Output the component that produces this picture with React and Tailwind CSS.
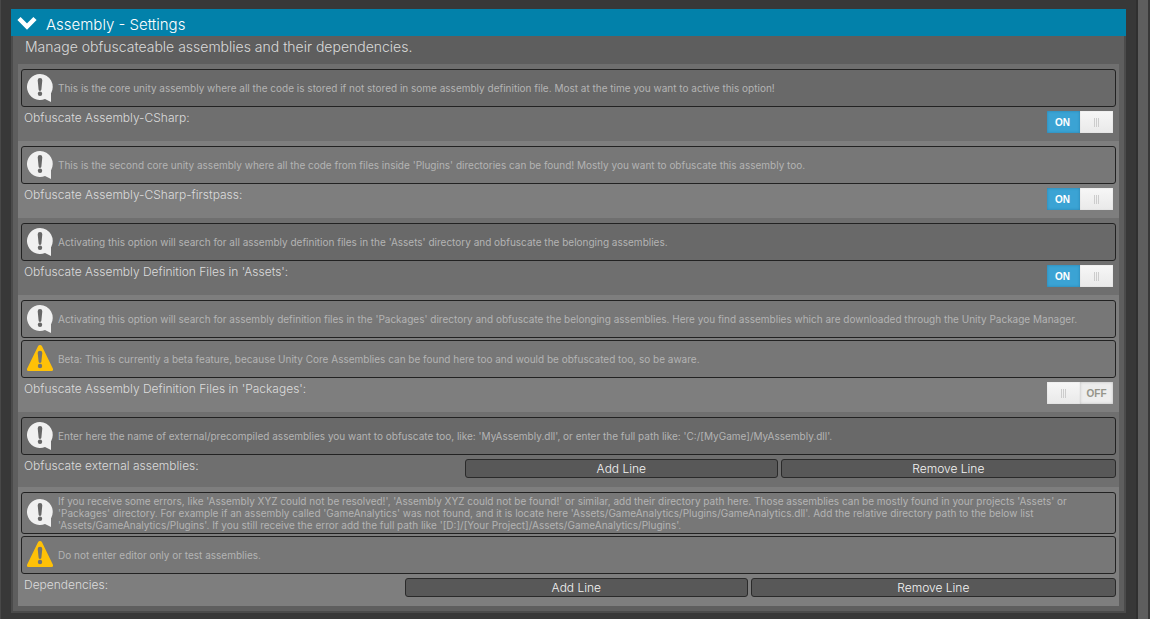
import React, { useId, useState } from 'react';

const sections = [
  {
    label: 'Obfuscate Assembly-CSharp:',
    notes: [
      { type: 'info', text: 'This is the core unity assembly where all the code is stored if not stored in some assembly definition file. Most at the time you want to active this option!' },
    ],
    control: 'toggle',
    on: true,
  },
  {
    label: 'Obfuscate Assembly-CSharp-firstpass:',
    notes: [
      { type: 'info', text: "This is the second core unity assembly where all the code from files inside 'Plugins' directories can be found! Mostly you want to obfuscate this assembly too." },
    ],
    control: 'toggle',
    on: true,
  },
  {
    label: "Obfuscate Assembly Definition Files in 'Assets':",
    notes: [
      { type: 'info', text: "Activating this option will search for all assembly definition files in the 'Assets' directory and obfuscate the belonging assemblies." },
    ],
    control: 'toggle',
    on: true,
  },
  {
    label: "Obfuscate Assembly Definition Files in 'Packages':",
    notes: [
      { type: 'info', text: "Activating this option will search for assembly definition files in the 'Packages' directory and obfuscate the belonging assemblies. Here you find assemblies which are downloaded through the Unity Package Manager." },
      { type: 'warning', text: 'Beta: This is currently a beta feature, because Unity Core Assemblies can be found here too and would be obfuscated too, so be aware.' },
    ],
    control: 'toggle',
    on: false,
  },
  {
    label: 'Obfuscate external assemblies:',
    notes: [
      { type: 'info', text: "Enter here the name of external/precompiled assemblies you want to obfuscate too, like: 'MyAssembly.dll', or enter the full path like: 'C:/[MyGame]/MyAssembly.dll'." },
    ],
    control: 'list',
    labelWidth: 'w-[441px]',
  },
  {
    label: 'Dependencies:',
    notes: [
      { type: 'info', text: "If you receive some errors, like 'Assembly XYZ could not be resolved!', 'Assembly XYZ could not be found!' or similar, add their directory path here. Those assemblies can be mostly found in your projects 'Assets' or 'Packages' directory. For example if an assembly called 'GameAnalytics' was not found, and it is locate here 'Assets/GameAnalytics/Plugins/GameAnalytics.dll'. Add the relative directory path to the below list 'Assets/GameAnalytics/Plugins'. If you still receive the error add the full path like '[D:]/[Your Project]/Assets/GameAnalytics/Plugins'." },
      { type: 'warning', text: 'Do not enter editor only or test assemblies.' },
    ],
    control: 'list',
    labelWidth: 'w-[381px]',
  },
];

const InfoIcon = () => (
  <svg viewBox="0 0 26 30" className="h-[30px] w-[26px] shrink-0" aria-hidden="true">
    <path d="M13 1a13 13 0 1 0 5 25l6 3v-8.500A13 13 0 0 0 13 1z" fill="#f0f0f0" />
    <path d="M10.700 7.200a2.300 2.300 0 0 1 4.600 0l-.9 9.300a1.400 1.400 0 0 1-2.800 0z" fill="#666" />
    <circle cx="13" cy="20.800" r="2.200" fill="#666" />
  </svg>
);

const WarningIcon = () => (
  <svg viewBox="0 0 26 30" className="h-[30px] w-[26px] shrink-0" aria-hidden="true">
    <path d="M11 2.200a2.300 2.300 0 0 1 4 0l10.800 22.300a1.500 1.500 0 0 1-1.300 2.500H1.500a1.500 1.500 0 0 1-1.300-2.500z" fill="#ffc107" />
    <path d="M10.700 9a2.300 2.300 0 0 1 4.600 0l-.9 8.500a1.400 1.400 0 0 1-2.800 0z" fill="#737373" />
    <circle cx="13" cy="22" r="2.200" fill="#737373" />
  </svg>
);

const Note = ({ type, text }) => (
  <div className="flex min-h-[38px] items-center gap-[5px] rounded-[3px] border border-[#222] bg-black/5 pl-[5px] pr-6">
    {type === 'info' ? <InfoIcon /> : <WarningIcon />}
    <p className="py-0.5 text-[10px] leading-3 text-[#b4b4b4]">{text}</p>
  </div>
);

const Grip = () => (
  <span className="flex w-[33px] items-center justify-center gap-px bg-linear-to-b from-[#f7f7f7] to-[#e9e9e9] shadow-[inset_0_0_1px_#bbb]">
    <span className="h-[9px] w-px bg-[#ccc]"></span>
    <span className="h-[9px] w-px bg-[#ccc]"></span>
    <span className="h-[9px] w-px bg-[#ccc]"></span>
  </span>
);

const Toggle = ({ id, initial }) => {
  const [on, setOn] = useState(initial);

  return (
    <label className="mr-[3px] flex h-[22px] w-[66px] cursor-pointer font-['Liberation_Sans',sans-serif] text-[10px] font-bold">
      <input
        id={id}
        type="checkbox"
        role="switch"
        checked={on}
        onChange={(e) => setOn(e.target.checked)}
        className="sr-only"
      />
      {!on && <Grip />}
      {on ? (
        <span className="flex w-[33px] items-center justify-center bg-[#3ba3d4] pt-px pr-0.5 text-white shadow-[inset_0_0_3px_#2a82ad]">
          ON
        </span>
      ) : (
        <span className="flex w-[33px] items-center justify-center bg-[#ededed] pt-px text-[#95958a] shadow-[inset_0_0_3px_#bbb]">
          OFF
        </span>
      )}
      {on && <Grip />}
    </label>
  );
};

const LineButton = ({ children }) => (
  <button className="h-[19px] flex-auto rounded-[3px] border border-[#2a2a2a] bg-[#585858] text-xs leading-4 font-light text-[#f4f4f4] hover:bg-[#676767]">
    {children}
  </button>
);

const Section = ({ label, notes, control, on, labelWidth }) => {
  const id = useId();

  return (
    <section className="px-[3px] pt-[5px] pb-2 odd:bg-[#6f6f6f] even:bg-[#7e7e7e]">
      <div className="space-y-0.5">
        {notes.map((note) => (
          <Note key={note.text} {...note} />
        ))}
      </div>

      {control === 'toggle' ? (
        <div className="mt-1 flex items-start justify-between">
          <label htmlFor={id} className="pl-[3px] text-xs leading-[14px] font-light text-[#dcdcdc]">
            {label}
          </label>
          <Toggle id={id} initial={on} />
        </div>
      ) : (
        <div role="group" aria-labelledby={id} className="mt-1 flex h-5 items-start gap-[3px]">
          <span id={id} className={`${labelWidth} shrink-0 pl-[3px] text-xs leading-[14px] font-light text-[#dcdcdc]`}>
            {label}
          </span>
          <LineButton>Add Line</LineButton>
          <LineButton>Remove Line</LineButton>
        </div>
      )}
    </section>
  );
};

const App = () => {
  const [open, setOpen] = useState(true);

  return (
    <div className="flex min-h-screen border-l border-[#484848] bg-[#383838] font-[Inter,sans-serif]">
      <main className="flex-1 px-[10px] py-[9px]">
        {/* Foldout header */}
        <button
          onClick={() => setOpen(!open)}
          aria-expanded={open}
          className="flex h-[27px] w-full items-center gap-[9px] bg-[#0281aa] pl-1.5 text-left text-[15px] text-white"
        >
          <svg viewBox="0 0 20 14" className="h-[14px] w-5" aria-hidden="true">
            <path d="M2 2.500l8 8 8-8" fill="none" stroke="#fff" strokeWidth="4.500" />
          </svg>
          <span className="pt-1.5 font-light">Assembly - Settings</span>
        </button>

        {open && (
          <div className="border-x-2 border-b-2 border-[#4b4b4b] bg-[#5e5e5e] px-[5px] pb-[5px]">
            <p className="h-7 pl-[7px] text-sm leading-[22px] font-light text-[#dadada]">
              Manage obfuscateable assemblies and their dependencies.
            </p>
            <div>
              {sections.map((section) => (
                <Section key={section.label} {...section} />
              ))}
            </div>
          </div>
        )}
      </main>

      {/* Scroll track */}
      <div className="w-[14px] border-x-2 border-l-[#303030] border-r-[#383838] bg-[#5e5e5e]"></div>
    </div>
  );
};

export default App;
